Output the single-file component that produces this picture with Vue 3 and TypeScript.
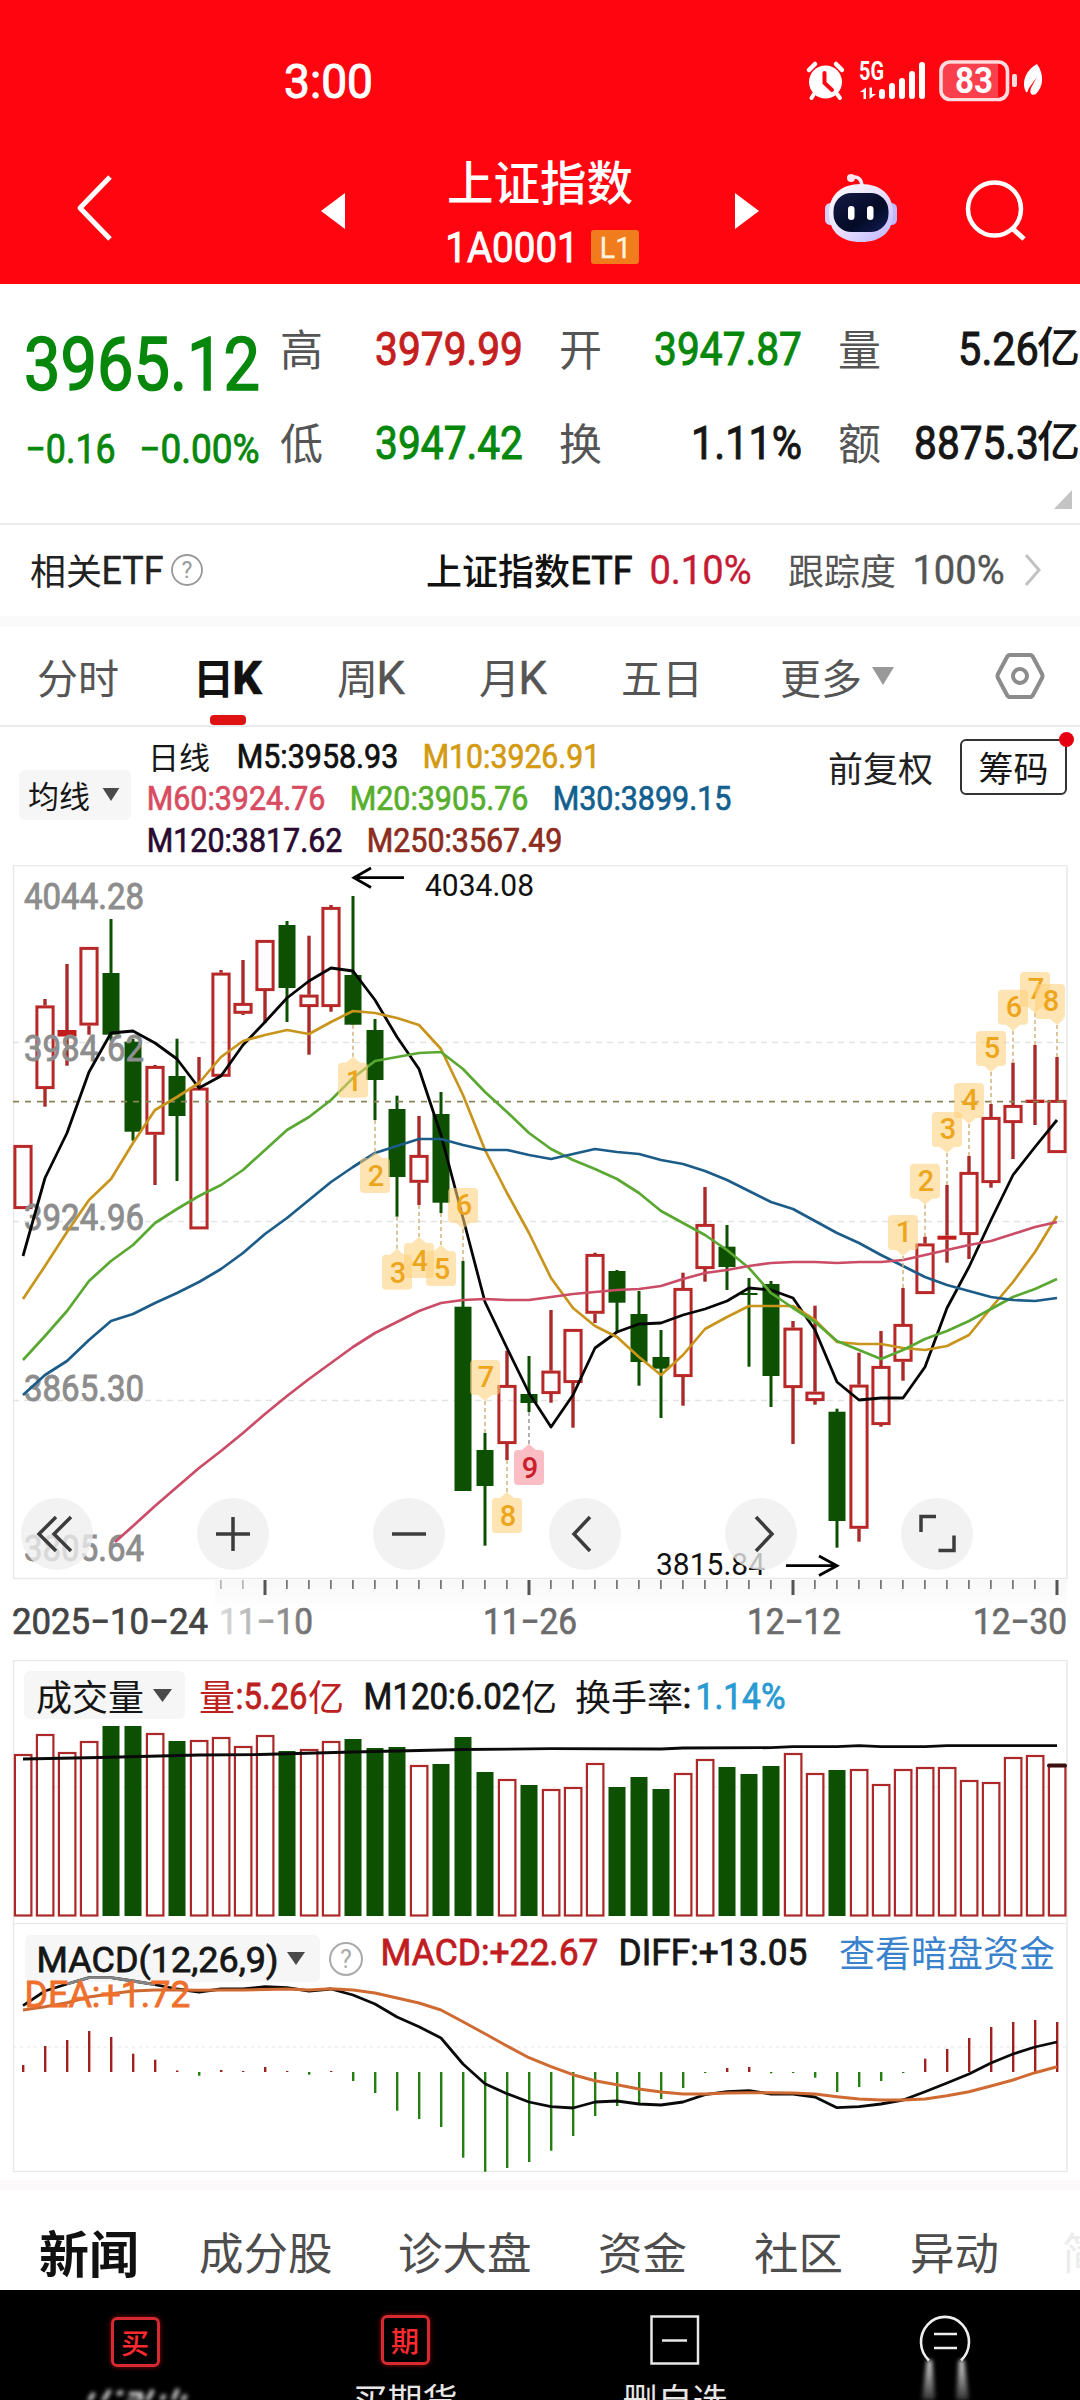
<script setup lang="ts">
import { h, type FunctionalComponent } from 'vue'

type Row = [number, number, number, number, 'r' | 'g']

/* Numeric label set to an exact width in a narrow, DIN-like proportion */
const Fit: FunctionalComponent<{ t: string; w: number; s: number; b?: number }> = (p) =>
  h('svg', { width: p.w, height: p.s, style: 'display:block;overflow:visible;flex:none' }, [
    h(
      'text',
      {
        x: -0.04 * p.s,
        y: 0.856 * p.s,
        textLength: p.w + 0.08 * p.s,
        lengthAdjust: 'spacingAndGlyphs',
        fill: 'currentColor',
        stroke: 'currentColor',
        'stroke-width': p.b === 500 ? 0.022 * p.s : 0.4,
        'font-family': 'Roboto, sans-serif',
        'font-size': p.s,
        'font-weight': p.b === 800 ? 800 : 400,
      },
      p.t,
    ),
  ])
Fit.props = ['t', 'w', 's', 'b']

const cx = (i: number): number => 23 + 22 * i
const toPoints = (ys: number[], from = 0): string => ys.map((y, i) => `${cx(i + from)},${y}`).join(' ')

/* high, body top, body bottom, low */
const candles: Row[] = [
  [1145, 1145, 1209, 1209, 'r'], [999, 1005.5, 1089, 1106.7, 'r'], [964, 1030, 1036.5, 1065.7, 'r'], [947, 947, 1025.5, 1034.7, 'r'],
  [919, 973, 1034.7, 1040.7, 'g'], [1039, 1041.7, 1131.7, 1140.7, 'g'], [1065, 1066, 1134.7, 1185, 'r'], [1038.7, 1076, 1116, 1181, 'g'],
  [1057, 1087.7, 1229.3, 1229.3, 'r'], [970, 972.7, 1076.7, 1076.7, 'r'], [960, 1003, 1013.7, 1015, 'r'], [940, 940, 991, 1023, 'r'],
  [921, 925, 988, 1022, 'g'], [935.7, 994.7, 1007, 1054.7, 'r'], [905, 907, 1007, 1011.7, 'r'], [896, 975, 1024.7, 1024.7, 'g'],
  [1019, 1030, 1080, 1120, 'g'], [1095.7, 1109, 1177, 1216.7, 'g'], [1116, 1155, 1182.7, 1205, 'r'], [1092, 1114, 1202.7, 1213, 'g'],
  [1261, 1306.7, 1491, 1491, 'g'], [1433, 1450, 1486, 1545.7, 'g'], [1350.7, 1385, 1444, 1460, 'r'], [1356, 1394, 1403, 1412, 'g'],
  [1310, 1370.7, 1394, 1402.7, 'r'], [1329, 1329, 1383, 1427.7, 'r'], [1252.7, 1254, 1313.7, 1323, 'r'], [1270, 1271, 1302.7, 1331.7, 'g'],
  [1291, 1314, 1362, 1385.7, 'g'], [1330, 1357, 1368.7, 1418, 'g'], [1272.7, 1288, 1377, 1405.7, 'r'], [1187, 1224, 1269, 1281.7, 'r'],
  [1225, 1246.7, 1267, 1290, 'g'], [1278, 1293, 1295, 1366.7, 'g'], [1281, 1284, 1376, 1407, 'g'], [1321, 1327.7, 1388, 1444, 'r'],
  [1305.7, 1391.7, 1401, 1404.7, 'r'], [1408.7, 1411.7, 1521, 1547.7, 'g'], [1352.7, 1384.7, 1528.7, 1541.7, 'r'], [1331, 1366, 1425, 1426.7, 'r'],
  [1288, 1324, 1361.7, 1380.7, 'r'], [1236.7, 1243.5, 1294, 1294, 'r'], [1185, 1235.7, 1239.7, 1262.7, 'r'], [1156, 1172, 1235, 1259, 'r'],
  [1104, 1117, 1183, 1187.7, 'r'], [1062.7, 1105, 1123, 1159, 'r'], [1045, 1099.7, 1103, 1125, 'r'], [1057, 1100, 1153, 1153, 'r'],
]

const m5 = [1256, 1178, 1133, 1072, 1033, 1031, 1043, 1059, 1088, 1076, 1045, 1022, 998, 981, 968, 971, 1000, 1037, 1069, 1135, 1218, 1302, 1348, 1393, 1427, 1395, 1348, 1332, 1324, 1323, 1315, 1309, 1301, 1288, 1290, 1298, 1330, 1382, 1400, 1398, 1398, 1367, 1308, 1267, 1220, 1175, 1147, 1120]
const m10 = [1299, 1266, 1232, 1200, 1179, 1143, 1110, 1097, 1083, 1057, 1041, 1035, 1030, 1034, 1022, 1011, 1013, 1018, 1025, 1049, 1095, 1150, 1193, 1233, 1278, 1308, 1326, 1337, 1357, 1375, 1355, 1329, 1317, 1306, 1306, 1306, 1320, 1342, 1344, 1344, 1348, 1350, 1346, 1335, 1308, 1282, 1252, 1216]
const m20 = [1360, 1336, 1311, 1281, 1261, 1245, 1223, 1209, 1196, 1185, 1170, 1150, 1130, 1117, 1100, 1078, 1061, 1057, 1053, 1052, 1069, 1092, 1112, 1133, 1149, 1160, 1169, 1179, 1193, 1211, 1223, 1235, 1250, 1268, 1293, 1308, 1322, 1341, 1350, 1359, 1350, 1339, 1331, 1321, 1309, 1297, 1289, 1279]
const m30 = [1395, 1375, 1361, 1340, 1321, 1314, 1303, 1293, 1282, 1269, 1253, 1234, 1218, 1200, 1182, 1167, 1153, 1146, 1139, 1139, 1145, 1150, 1150, 1155, 1159, 1154, 1149, 1152, 1154, 1160, 1164, 1171, 1180, 1191, 1202, 1209, 1221, 1233, 1243, 1255, 1266, 1277, 1285, 1291, 1297, 1300, 1301, 1298]
const m60 = [1526, 1506, 1487, 1468, 1451, 1433, 1414, 1396, 1379, 1363, 1347, 1333, 1322, 1311, 1303, 1300, 1299, 1300, 1300, 1297, 1294, 1292, 1290, 1289, 1286, 1279, 1273, 1270, 1266, 1263, 1262, 1262, 1263, 1262, 1262, 1260, 1255, 1250, 1245, 1241, 1234, 1227, 1222]

interface Mark { i: number; n: string; tip: number; wick: number; dir: 1 | -1; hot: boolean; dx: number }
const mark = (i: number, n: number, dir: 1 | -1): Mark => {
  const wick = dir === 1 ? candles[i][3] : candles[i][0]
  return { i, n: String(n), wick, tip: wick + 32 * dir, dir, hot: n === 9, dx: i === 47 ? -7 : 0 }
}
const marks: Mark[] = [
  mark(15, 1, 1), mark(16, 2, 1), mark(17, 3, 1), mark(18, 4, 1), mark(19, 5, 1), mark(20, 6, -1), mark(21, 7, -1), mark(22, 8, 1), mark(23, 9, 1),
  ...[1, 2, 3, 4, 5, 6, 7, 8].map((n) => mark(39 + n, n, -1)),
]
const markPath = (m: Mark): string => {
  const d = m.dir
  const t = cx(m.i)
  const x = t + m.dx
  const s = d === 1 ? 1 : 0
  return `M${t} ${m.tip}L${t + 7} ${m.tip + 6 * d}H${x + 11}A4 4 0 0 ${s} ${x + 15} ${m.tip + 10 * d}V${m.tip + 37 * d}A4 4 0 0 ${s} ${x + 11} ${m.tip + 41 * d}H${x - 11}A4 4 0 0 ${s} ${x - 15} ${m.tip + 37 * d}V${m.tip + 10 * d}A4 4 0 0 ${s} ${x - 11} ${m.tip + 6 * d}H${t - 7}Z`
}

const yLabels = [
  { t: '4044.28', y: 908.5 }, { t: '3984.62', y: 1061 }, { t: '3924.96', y: 1230 }, { t: '3865.30', y: 1400.5 }, { t: '3805.64', y: 1561 },
]
const ticks = Array.from({ length: 39 }, (_, k) => k + 9)
const dates = [
  { t: '2025-10-24', x: 13, w: 194, c: '#444' }, { t: '11-10', x: 220, w: 92, c: 'url(#fade)' },
  { t: '11-26', x: 484, w: 92, c: '#6c6c6c' }, { t: '12-12', x: 748, w: 92, c: '#6c6c6c' }, { t: '12-30', x: 974, w: 92, c: '#6c6c6c' },
]

const volumes = [1754, 1734, 1752, 1741, 1726, 1726, 1733, 1741, 1740, 1737, 1746, 1735, 1751, 1749, 1741, 1739, 1748, 1747, 1765, 1764, 1737, 1772, 1779, 1785, 1789, 1787, 1763, 1787, 1777, 1789, 1773, 1759, 1767, 1774, 1766, 1753, 1773, 1770, 1769, 1784, 1769, 1767, 1767, 1780, 1782, 1757, 1755, 1765]
const volumeAvg = '23,1759 100,1757.5 199,1755 260,1754.5 353,1752 463,1749.5 551,1748.7 661,1749 683,1748 771,1747.7 793,1746.7 837,1746.7 859,1745.7 881,1746.7 925,1746.7 947,1745.7 1057,1745.7'

const macdBars = [2065, 2046, 2040, 2031, 2037, 2053.7, 2059.7, 2070.5, 2075.7, 2070, 2071, 2067, 2071, 2074.7, 2071, 2081, 2093, 2110.7, 2119, 2127, 2157.7, 2171.7, 2168, 2162, 2150.7, 2136, 2116, 2106, 2103, 2099, 2088, 2073, 2068, 2067, 2073.3, 2073, 2077.7, 2092, 2087, 2081, 2073, 2058.7, 2049, 2038, 2027, 2022, 2020, 2022]
const diff = [2005.7, 1991, 1984, 1977.7, 1977.7, 1981, 1984.7, 1989, 1992, 1989, 1989, 1986.7, 1987.7, 1991, 1989, 1995, 2004, 2017, 2026.7, 2038, 2064, 2083.7, 2093.7, 2102, 2106.7, 2108, 2102, 2101, 2104, 2105, 2102, 2094.7, 2091.7, 2090.7, 2094, 2094, 2097, 2107.7, 2106.7, 2104, 2100, 2091.7, 2083, 2074, 2063, 2054, 2047, 2042]
const dea = [2010, 2006.7, 2002.7, 1997, 1993.7, 1991, 1990, 1990, 1990.3, 1990, 1990, 1989.5, 1989, 1990, 1988.7, 1990, 1993, 1998, 2003, 2010, 2021.7, 2033.7, 2046, 2057.7, 2066.7, 2074.7, 2080.7, 2084.7, 2089, 2092, 2094, 2094, 2093, 2092.7, 2092.7, 2093, 2094, 2096.7, 2099, 2100, 2100, 2099, 2095.7, 2091.7, 2086, 2080, 2072.7, 2066.7]

const buttons = ['first', 'plus', 'minus', 'prev', 'next', 'full'] as const
const glyphs: Record<(typeof buttons)[number], string> = {
  first: 'M35 19L18 36L35 53M50 19L33 36L50 53',
  plus: 'M36 19V53M19 36H53',
  minus: 'M19 36H53',
  prev: 'M41 19L25 36L41 53',
  next: 'M31 19L47 36L31 53',
  full: 'M35 18.500H20V34M37.500 52.500H53V37.500',
}
</script>

<template>
  <div class="page">
    <header class="top">
      <div class="status">
        <Fit class="clock" t="3:00" :w="85" :s="48" :b="500" />
        <svg class="status-icons" width="240" height="46" viewBox="805 58 240 46">
          <g fill="#fff">
            <path d="M809 70L815 64" stroke="#fff" stroke-width="4.500" stroke-linecap="round" />
            <path d="M842 70L836 64" stroke="#fff" stroke-width="4.500" stroke-linecap="round" />
            <circle cx="825.500" cy="82" r="16.500" />
            <path d="M814 94L811.500 98M837 94L840 98" stroke="#fff" stroke-width="4" stroke-linecap="round" />
            <path d="M824.500 73V83L832 90" stroke="#fe0510" stroke-width="4" fill="none" stroke-linecap="round" />
            <text x="859" y="80" textLength="25" lengthAdjust="spacingAndGlyphs" font-family="Roboto, sans-serif" font-size="25" font-weight="700">5G</text>
            <path d="M860 92L866 87.500V99H863.500V92ZM876 94L869.500 99V87.500H872V94Z" />
            <rect x="879" y="89" width="6" height="10" rx="3" />
            <rect x="889" y="83" width="6" height="16" rx="3" />
            <rect x="899" y="78" width="6" height="21" rx="3" />
            <rect x="909" y="71" width="6" height="28" rx="3" />
            <rect x="919" y="62" width="6" height="37" rx="3" />
            <path d="M948 64H998V97H948Q943 97 943 91V70Q943 64 948 64Z" fill="#f9404c" />
            <rect x="941" y="62" width="66.500" height="37.500" rx="9" fill="none" stroke="#ffdcdf" stroke-width="3.600" />
            <text x="955" y="93" textLength="38" lengthAdjust="spacingAndGlyphs" font-family="Roboto, sans-serif" font-size="36" font-weight="700">83</text>
            <rect x="1012" y="74" width="5" height="13" rx="2" fill="#ffdcdf" />
            <path d="M1037 64C1044 74 1044 86 1036 94C1032 96 1029 94 1031 88L1037 77L1029 88C1027 92 1028 93 1026 92C1021 82 1026 70 1037 64Z" />
          </g>
        </svg>
      </div>
      <div class="nav">
        <svg class="back" width="38" height="68" viewBox="0 0 38 68"><path d="M34 3L4 34L34 65" fill="none" stroke="#fff" stroke-width="5" stroke-linejoin="round" /></svg>
        <svg class="tri-l" width="24" height="36" viewBox="0 0 24 36"><path d="M24 0V36L0 18Z" fill="#fff" /></svg>
        <div class="title">
          <div class="name">上证指数</div>
          <div class="code"><Fit t="1A0001" :w="130" :s="43" :b="500" /><span class="badge"><Fit t="L1" :w="29" :s="30" /></span></div>
        </div>
        <svg class="tri-r" width="24" height="36" viewBox="0 0 24 36"><path d="M0 0V36L24 18Z" fill="#fff" /></svg>
        <svg class="bot" width="74" height="72" viewBox="824 172 74 72">
          <defs>
            <linearGradient id="shell" x1="0" y1="0" x2="1" y2="1"><stop offset="0" stop-color="#fff" /><stop offset=".55" stop-color="#e6dcff" /><stop offset="1" stop-color="#b9b4ff" /></linearGradient>
            <linearGradient id="visor" x1="0" y1="0" x2="1" y2="1"><stop offset="0" stop-color="#151a45" /><stop offset=".6" stop-color="#030b26" /><stop offset="1" stop-color="#141d55" /></linearGradient>
          </defs>
          <path d="M862 187C862 179 857 175 851 178" fill="none" stroke="#f6eaff" stroke-width="3.500" />
          <circle cx="851" cy="178" r="4" fill="#ffe3ee" />
          <rect x="825" y="203" width="11" height="22" rx="5.500" fill="#d9cfff" />
          <rect x="886" y="203" width="11" height="22" rx="5.500" fill="#c0b8ff" />
          <path d="M861 184C881 184 893 195 893 213C893 232 881 242 861 242C841 242 829 232 829 213C829 195 841 184 861 184Z" fill="url(#shell)" />
          <rect x="833.500" y="193" width="55" height="39" rx="18" fill="url(#visor)" />
          <rect x="848" y="206" width="6.500" height="14" rx="3.200" fill="#fff" />
          <rect x="867" y="206" width="6.500" height="14" rx="3.200" fill="#fff" />
        </svg>
        <svg class="search" width="62" height="66" viewBox="964 178 62 66" fill="none" stroke="#fff"><circle cx="994.500" cy="209" r="26.500" stroke-width="4.500" /><path d="M1013 229L1024 239" stroke-width="5" /></svg>
      </div>
    </header>

    <section class="quote">
      <div class="last">
        <Fit class="price" t="3965.12" :w="230" :s="75" :b="500" />
        <div class="chg"><Fit t="−0.16" :w="87" :s="40" :b="500" /><Fit t="−0.00%" :w="117" :s="40" :b="500" /></div>
      </div>
      <div class="cells">
        <div class="cell"><span>高</span><Fit class="up" t="3979.99" :w="144" :s="47" :b="500" /></div>
        <div class="cell"><span>开</span><Fit class="down" t="3947.87" :w="144" :s="47" :b="500" /></div>
        <div class="cell wide"><span>量</span><div class="val"><Fit t="5.26" :w="77" :s="47" :b="500" /><b>亿</b></div></div>
        <div class="cell"><span>低</span><Fit class="down" t="3947.42" :w="144" :s="47" :b="500" /></div>
        <div class="cell"><span>换</span><Fit class="val" t="1.11%" :w="107" :s="47" :b="500" /></div>
        <div class="cell wide"><span>额</span><div class="val"><Fit t="8875.3" :w="121" :s="47" :b="500" /><b>亿</b></div></div>
      </div>
      <svg class="corner" width="18" height="19" viewBox="0 0 18 19"><path d="M18 0V19H0Z" fill="#c4c4c4" /></svg>
    </section>

    <section class="etf">
      <span class="cjk">相关</span><Fit class="e1" t="ETF" :w="59" :s="38" />
      <svg class="help" width="34" height="34" viewBox="0 0 34 34"><circle cx="17" cy="17" r="15" fill="none" stroke="#999" stroke-width="1.800" /><text x="17" y="25" text-anchor="middle" font-family="Roboto, sans-serif" font-size="23" fill="#999">?</text></svg>
      <span class="cjk strong">上证指数</span><Fit class="e2" t="ETF" :w="59" :s="38" :b="500" />
      <Fit class="e3" t="0.10%" :w="99" :s="40" />
      <span class="cjk soft">跟踪度</span><Fit class="e4" t="100%" :w="89" :s="40" />
      <svg class="more" width="18" height="34" viewBox="0 0 18 34"><path d="M2 2L15 17L2 32" fill="none" stroke="#c2c2c2" stroke-width="3" /></svg>
    </section>
    <div class="band"></div>

    <nav class="tabs">
      <span class="t1">分时</span>
      <span class="t2 on">日<Fit t="K" :w="26" :s="46" :b="800" /></span>
      <span class="t3">周<Fit t="K" :w="25" :s="46" /></span>
      <span class="t4">月<Fit t="K" :w="25" :s="46" /></span>
      <span class="t5">五日</span>
      <span class="t6">更多</span>
      <svg class="caret" width="22" height="18" viewBox="0 0 22 18"><path d="M0 0H22L11 18Z" fill="#999" /></svg>
      <svg class="gear" width="50" height="48" viewBox="0 0 50 48" fill="none" stroke="#8c8c8c" stroke-width="4"><path d="M15 3H35Q37 3 38 5L47 22Q48 24 47 26L38 43Q37 45 35 45H15Q13 45 12 43L3 26Q2 24 3 22L12 5Q13 3 15 3Z" stroke-linejoin="round" /><circle cx="25" cy="24" r="7" /></svg>
    </nav>

    <section class="ma">
      <div class="pill ma-pill">均线<svg width="18" height="13" viewBox="0 0 18 14"><path d="M0 0H18L9 14Z" fill="#4a4a4a" /></svg></div>
      <div class="ma-list">
        <div class="ma-row"><span class="cjk31">日线</span><Fit class="k" t="M5:3958.93" :w="159" :s="33" :b="500" /><Fit class="y" t="M10:3926.91" :w="175" :s="33" :b="500" /></div>
        <div class="ma-row"><Fit class="p" t="M60:3924.76" :w="176" :s="33" :b="500" /><Fit class="g" t="M20:3905.76" :w="176" :s="33" :b="500" /><Fit class="b" t="M30:3899.15" :w="176" :s="33" :b="500" /></div>
        <div class="ma-row"><Fit class="v" t="M120:3817.62" :w="193" :s="33" :b="500" /><Fit class="n" t="M250:3567.49" :w="193" :s="33" :b="500" /></div>
      </div>
      <div class="adj">前复权</div>
      <div class="chip">筹码<i></i></div>
    </section>

    <section class="kchart">
      <svg width="1080" height="795" viewBox="0 865 1080 795">
        <defs>
          <linearGradient id="fade"><stop offset="0" stop-color="#ddd" /><stop offset="1" stop-color="#6c6c6c" /></linearGradient>
          <linearGradient id="axis" x1="0" y1="0" x2="0" y2="1"><stop offset="0" stop-color="#f8f8f8" /><stop offset="1" stop-color="#fff" /></linearGradient>
        </defs>
        <rect x="215" y="1580" width="852" height="34" fill="url(#axis)" />
        <rect x="13.500" y="865.500" width="1053.500" height="713" fill="none" stroke="#e9e9e9" stroke-width="1.500" />
        <path d="M13 1042.500H1067M13 1221.500H1067M13 1400.500H1067" stroke="#e3e3e3" stroke-width="1.500" stroke-dasharray="6 5" />
        <g v-for="(c, i) in candles" :key="'c' + i">
          <template v-if="c[4] === 'g'">
            <rect :x="cx(i) - 1.5" :y="c[0]" width="3" :height="c[3] - c[0]" fill="#0d5002" />
            <rect :x="cx(i) - 8.5" :y="c[1]" width="17" :height="c[2] - c[1]" fill="#0d5002" />
          </template>
          <template v-else>
            <rect :x="cx(i) - 1.7" :y="c[0]" width="3.400" :height="c[1] - c[0]" fill="#a82a2a" />
            <rect :x="cx(i) - 1.7" :y="c[2]" width="3.400" :height="c[3] - c[2]" fill="#a82a2a" />
            <rect v-if="c[2] - c[1] > 7" :x="cx(i) - 8.1" :y="c[1] + 1.4" width="16.200" :height="c[2] - c[1] - 2.800" fill="none" stroke="#b82828" stroke-width="3" />
            <rect v-else :x="cx(i) - 9.5" :y="c[1]" width="19" :height="c[2] - c[1]" fill="#c21d1d" />
          </template>
        </g>
        <path d="M13 1101.700H1067" stroke="#8a8258" stroke-width="1.800" stroke-dasharray="6 6" />
        <g fill="#8d8d8d" stroke="#8d8d8d" stroke-width=".9" font-family="Roboto, sans-serif" font-size="36">
          <text v-for="l in yLabels" :key="l.t" x="24" :y="l.y" textLength="120" lengthAdjust="spacingAndGlyphs">{{ l.t }}</text>
        </g>
        <g fill="none" stroke-linejoin="round">
          <polyline :points="toPoints(m5)" stroke="#050505" stroke-width="2.800" />
          <polyline :points="toPoints(m10)" stroke="#c8941c" stroke-width="2.700" />
          <polyline :points="toPoints(m20)" stroke="#5aa832" stroke-width="2.700" />
          <polyline :points="toPoints(m30)" stroke="#1c5c88" stroke-width="2.700" />
          <polyline :points="'115,1542 ' + toPoints(m60, 5)" stroke="#cb4c66" stroke-width="2.700" />
        </g>
        <g v-for="(m, k) in marks" :key="'m' + k">
          <path :d="`M${cx(m.i)} ${m.wick}V${m.tip}`" :stroke="m.hot ? '#999' : '#d2b27c'" stroke-width="1.500" stroke-dasharray="4 3" />
          <path :d="markPath(m)" :fill="m.hot ? '#f58a94' : '#ffce78'" fill-opacity=".56" />
          <text :x="cx(m.i) + m.dx + 1" :y="m.tip + (m.dir === 1 ? 34 : -14)" text-anchor="middle" font-family="Roboto, sans-serif" font-size="29" font-weight="500" :fill="m.hot ? '#c9202c' : '#eda51c'">{{ m.n }}</text>
        </g>
        <g fill="none" stroke="#000" stroke-width="2.800">
          <path d="M404 877.700H355M371 868L354 877.700L371 887.500" />
          <path d="M786 1565.700H836M819 1556L837 1565.700L819 1575.500" />
        </g>
        <g fill="#111" font-family="Roboto, sans-serif" font-size="32">
          <text x="425" y="895.500" textLength="109" lengthAdjust="spacingAndGlyphs">4034.08</text>
          <text x="656" y="1575" textLength="109" lengthAdjust="spacingAndGlyphs">3815.84</text>
        </g>
        <g fill="#555">
          <template v-for="i in ticks" :key="'t' + i">
            <rect v-if="i % 12 === 11" :x="cx(i) - 1.5" y="1580" width="3" height="15" />
            <rect v-else :x="cx(i) - 0.8" y="1580" width="1.400" height="9" :opacity="i < 11 ? 0.5 : 1" />
          </template>
        </g>
        <g font-family="Roboto, sans-serif" font-size="36" stroke-width=".7">
          <text v-for="d in dates" :key="d.t" :x="d.x - 1" y="1634" :textLength="d.w + 2" lengthAdjust="spacingAndGlyphs" :fill="d.c" :stroke="d.c">{{ d.t.replace(/-/g, '−') }}</text>
        </g>
      </svg>
      <div class="tools">
        <button v-for="b in buttons" :key="b"><svg width="72" height="72" viewBox="0 0 72 72"><path :d="glyphs[b]" fill="none" stroke="#3c3c3c" stroke-width="3.500" /></svg></button>
      </div>
    </section>

    <section class="volume">
      <svg width="1080" height="263" viewBox="0 1660 1080 263">
        <path d="M13.500 1923V1660.500H1067V1923" fill="none" stroke="#e9e9e9" stroke-width="1.500" />
        <path d="M13 1787H1067" stroke="#ececec" stroke-width="1.200" stroke-dasharray="5 5" />
        <template v-for="(v, i) in volumes" :key="i">
          <rect v-if="candles[i][4] === 'g'" :x="cx(i) - 8.5" :y="v" width="17" :height="1916 - v" fill="#0d5002" />
          <rect v-else :x="cx(i) - 8.1" :y="v + 1" width="16.500" :height="1914.500 - v" fill="#fff" stroke="#ad2929" stroke-width="2.200" />
        </template>
        <path d="M1049 1765.500H1065" stroke="#3a1010" stroke-width="4" stroke-linecap="round" />
        <polyline :points="volumeAvg" fill="none" stroke="#0a0a0a" stroke-width="2.800" />
      </svg>
      <div class="legend vol-legend">
        <div class="pill vol-pill">成交量<svg width="19" height="13" viewBox="0 0 19 13"><path d="M0 0H19L9.500 13Z" fill="#4a4a4a" /></svg></div>
        <span class="vr">量<Fit t=":5.26" :w="69" :s="36" :b="500" />亿</span>
        <span class="vk"><Fit t="M120:6.02" :w="154" :s="36" :b="500" />亿</span>
        <span class="vt">换手率<Fit t=":" :w="6" :s="36" :b="500" /></span>
        <Fit class="vb" t="1.14%" :w="87" :s="36" :b="500" />
      </div>
    </section>

    <section class="macd">
      <svg width="1080" height="257" viewBox="0 1923 1080 257">
        <rect x="13.500" y="1923.500" width="1053.500" height="248" fill="none" stroke="#e9e9e9" stroke-width="1.500" />
        <path d="M13 2047H1067" stroke="#e6e6e6" stroke-width="1.200" stroke-dasharray="3 4" />
        <rect x="25" y="1935" width="295" height="47" rx="6" fill="#f6f6f6" />
        <g>
          <rect v-for="(y, i) in macdBars" :key="i" :x="cx(i) - 1" :y="Math.min(y, 2072)" width="2.400" :height="Math.abs(y - 2072)" :fill="y < 2072 ? '#a02020' : '#23800f'" />
        </g>
        <polyline :points="toPoints(diff)" fill="none" stroke="#0a0a0a" stroke-width="2.800" stroke-linejoin="round" />
        <polyline points="67,1984 89,1977.700 111,1977.700 133,1981 155,1984.700" fill="none" stroke="#858585" stroke-width="2.800" />
        <polyline :points="toPoints(dea)" fill="none" stroke="#cf6a32" stroke-width="3" stroke-linejoin="round" />
      </svg>
      <div class="legend macd-legend">
        <Fit class="mk" t="MACD(12,26,9)" :w="239" :s="35" :b="500" />
        <svg class="mc" width="18" height="13" viewBox="0 0 18 13"><path d="M0 0H18L9 13Z" fill="#4a4a4a" /></svg>
        <svg class="mh" width="36" height="36" viewBox="0 0 36 36"><circle cx="18" cy="18" r="16" fill="none" stroke="#aaa" stroke-width="2" /><text x="18" y="27" text-anchor="middle" font-family="Roboto, sans-serif" font-size="25" fill="#aaa">?</text></svg>
        <Fit class="mr" t="MACD:+22.67" :w="215" :s="36" :b="500" />
        <Fit class="md" t="DIFF:+13.05" :w="186" :s="36" :b="500" />
        <span class="link">查看暗盘资金</span>
      </div>
      <div class="dea"><Fit t="DEA:+1.72" :w="163" :s="36" :b="500" /></div>
    </section>
    <div class="band2"></div>

    <nav class="news">
      <span class="n1">新闻</span><span class="n2">成分股</span><span class="n3">诊大盘</span><span class="n4">资金</span><span class="n5">社区</span><span class="n6">异动</span><span class="n7">简况</span>
    </nav>

    <footer class="dock">
      <div class="item">
        <div class="sq red">买</div>
        <svg class="smudge" width="108" height="20" viewBox="0 0 108 20"><g stroke="#ddd" fill="none" stroke-width="4"><path d="M8 20L13 12M22 20L29 9M36 13L42 11M46 20H60V13H48M66 20L72 9M80 19L84 14M92 19L97 8M101 20L105 14" /></g></svg>
      </div>
      <div class="item"><div class="sq red up2">期</div><p>买期货</p></div>
      <div class="item">
        <svg class="ic" width="50" height="50" viewBox="0 0 50 50" fill="none" stroke="#e8e8e8" stroke-width="2.500"><rect x="1.500" y="1.500" width="46.500" height="47" /><path d="M12 25.500H37" /></svg>
        <p>删自选</p>
      </div>
      <div class="item">
        <svg class="ic" width="90" height="85" viewBox="0 0 90 85" fill="none" stroke="#eee" stroke-width="2.600">
          <defs><linearGradient id="glow" x1="0" y1="0" x2="0" y2="1"><stop offset="0" stop-color="#ddd" /><stop offset="1" stop-color="#333" /></linearGradient></defs>
          <path d="M29 45.500A24 25 0 1 1 61 45.500" /><path d="M34 19H57M34 33H57" />
          <path class="soft-glow" d="M27 45H32L35 85H22ZM59 45H64L69 85H56Z" fill="url(#glow)" stroke="none" />
        </svg>
      </div>
    </footer>
  </div>
</template>

<style>
body { background: #fff; }
</style>

<style scoped>
.page { width: 1080px; height: 2400px; overflow: hidden; background: #fff; color: #161616; font-family: "Noto Sans CJK SC", sans-serif; line-height: 1; }
.page svg { display: block; flex: none; }
.top { height: 284px; background: #fe0510; color: #fff; overflow: hidden; }
.status { height: 46px; margin-top: 58px; display: flex; align-items: center; }
.clock { margin-left: 286px; }
.status-icons { margin-left: 434px; }
.nav { display: flex; height: 120px; margin-top: 50px; }
.back { margin: 20px 0 0 76px; }
.tri-l { margin: 39px 0 0 207px; }
.title { width: 194px; margin-left: 102px; }
.name { font-size: 46.500px; white-space: nowrap; margin-top: 3px; height: 46px; line-height: 46px; font-weight: 500; }
.code { display: flex; align-items: center; margin-top: 22px; height: 43px; }
.badge { margin-left: 14px; width: 48px; height: 34px; background: #f07c1e; border-radius: 3px; display: flex; align-items: center; justify-content: center; color: #fff3df; }
.tri-r { margin: 39px 0 0 94px; }
.bot { margin: 18px 0 0 65px; }
.search { margin: 24px 0 0 66px; }

.quote { display: flex; border-bottom: 2px solid #ebebeb; position: relative; box-sizing: border-box; height: 241px; }
.last { width: 280px; color: #07870c; }
.price { margin: 42px 0 0 27px; }
.chg { margin: 28px 0 0 27px; display: flex; gap: 27px; }
.cells { width: 800px; display: grid; grid-template-columns: 241px 241px 242px; column-gap: 38px; grid-template-rows: 94px 94px; padding-top: 17px; }
.cell { display: flex; align-items: center; justify-content: space-between; }
.cell span { font-size: 43px; color: #555; margin-top: -2px; }
.cell b { font-weight: 500; font-size: 43px; margin: -2px 0 0 0; }
.cell .val { display: flex; color: #161616; }
.up { color: #c41e1e; }
.down { color: #07870c; }
.corner { position: absolute; right: 8px; bottom: 14px; }

.etf { height: 91px; display: flex; align-items: center; color: #222; padding-left: 30px; }
.cjk { font-size: 36px; margin-top: -3px; }
.etf svg { margin-top: -2px; }
.e1 { margin-left: 1px; }
.help { margin-left: 8px; }
.strong { margin-left: 222px; font-weight: 500; color: #111; }
.e2 { margin-left: 2px; color: #111; }
.e3 { margin-left: 20px; color: #c41a34; }
.soft { margin-left: 38px; color: #555; }
.e4 { margin-left: 18px; color: #555; }
.more { margin-left: 21px; }
.band { height: 11px; background: #fafafa; }

.tabs { height: 100px; box-sizing: border-box; border-bottom: 2px solid #ebebeb; display: flex; align-items: center; font-size: 41px; color: #555; }
.tabs span { display: flex; align-items: center; flex: none; height: 100px; }
.tabs span svg { margin-top: 3px; }
.t1 { margin-left: 37px; width: 156px; }
.t2 { width: 144px; }
.tabs .on { color: #111; font-weight: 700; position: relative; }
.on::after { content: ""; position: absolute; left: 17px; bottom: 1px; width: 36px; height: 10px; border-radius: 4px; background: #de1212; }
.t3 { width: 142px; }
.t4 { width: 142px; }
.t5 { width: 159px; }
.t6 { width: 92px; }
.gear { margin-left: 101px; }

.ma { height: 138px; display: flex; }
.pill { background: #f6f6f6; border-radius: 6px; display: flex; align-items: center; }
.ma-pill { width: 112px; height: 50px; margin: 43px 0 0 19px; font-size: 31px; padding: 0 0 2px 9px; gap: 12px; box-sizing: border-box; }
.ma-list { margin: 8px 0 0 17px; width: 682px; }
.ma-row { height: 42px; display: flex; align-items: center; gap: 27px; }
.cjk31 { font-size: 31px; margin: -2px 1px 0 0; }
.k { color: #111; } .y { color: #d39a12; } .p { color: #d84c62; } .g { color: #56ae2c; } .b { color: #12608f; } .v { color: #2a0a30; } .n { color: #8d2c20; }
.adj { flex: none; font-size: 35px; margin: 22px 27px 0 -2px; white-space: nowrap; color: #222; }
.chip { width: 107px; height: 56px; margin-top: 12px; border: 2px solid #333; border-radius: 6px; box-sizing: border-box; font-size: 35px; display: flex; align-items: center; justify-content: center; position: relative; white-space: nowrap; flex: none; padding-bottom: 2px; }
.chip i { position: absolute; right: -9px; top: -9px; width: 15px; height: 15px; border-radius: 50%; background: #e60012; }

.kchart, .volume, .macd { position: relative; }
.tools { position: absolute; left: 21px; top: 633px; display: flex; gap: 104px; }
.tools button { width: 72px; height: 72px; border: 0; padding: 0; border-radius: 50%; background: rgba(238, 238, 238, .78); }

.legend { position: absolute; left: 0; display: flex; align-items: center; white-space: nowrap; }
.vol-legend { top: 11px; font-size: 36px; height: 48px; width: 1080px; }
.vol-legend .vr svg, .vol-legend .vk svg, .vol-legend .vb { margin-top: 2px; }
.vol-pill { margin-left: 24px; width: 161px; height: 48px; padding-left: 12px; gap: 9px; box-sizing: border-box; }
.legend span { display: flex; align-items: center; }
.vr { margin-left: 14px; color: #bc2020; }
.vk { margin-left: 21px; }
.vk, .vr { gap: 2px; }
.vt { margin-left: 18px; gap: 1px; }
.vb { margin-left: 7px; color: #2a9ad2; }
.macd-legend { top: 10px; height: 38px; width: 1080px; }
.mk { margin: 15px 0 0 38px; }
.mc { margin: 13px 0 0 10px; }
.mh { margin: 14px 0 0 23px; }
.mr { margin: 0 0 0 18px; color: #c01c22; }
.md { margin-left: 23px; }
.link { margin: -2px 0 0 33px; color: #3a82cc; font-size: 36px; }
.dea { position: absolute; left: 26px; top: 53px; color: #ef6f2c; }
.band2 { height: 10px; background: #fbf9f9; }

.news { height: 100px; display: flex; font-size: 44.500px; color: #4d4d4d; white-space: nowrap; overflow: hidden; }
.news span { flex: none; line-height: 122px; height: 100px; }
.n1 { width: 160px; margin-left: 39px; font-size: 50px; font-weight: 700; color: #111; }
.n2 { width: 199px; } .n3 { width: 200px; } .n4 { width: 156px; } .n5 { width: 156px; } .n6 { width: 152px; }
.n7 { color: #ececec; }

.dock { height: 110px; background: #000; display: flex; color: #e6e6e6; overflow: hidden; }
.item { width: 270px; display: flex; flex-direction: column; align-items: center; flex: none; }
.sq { flex: none; width: 49px; height: 50px; margin-top: 27px; box-sizing: border-box; border: 3px solid #d62a30; border-radius: 6px; color: #ff2a30; font-size: 28px; display: flex; align-items: center; justify-content: center; box-shadow: 0 0 5px #8c0a10; font-weight: 500; }
.up2 { margin-top: 25px; }
.item p { flex: none; margin: 16px 0 0; font-size: 35px; white-space: nowrap; }
.ic { margin-top: 25px; }
.smudge { margin-top: 14px; filter: blur(2px); }
.soft-glow { filter: blur(2px); }
</style>
